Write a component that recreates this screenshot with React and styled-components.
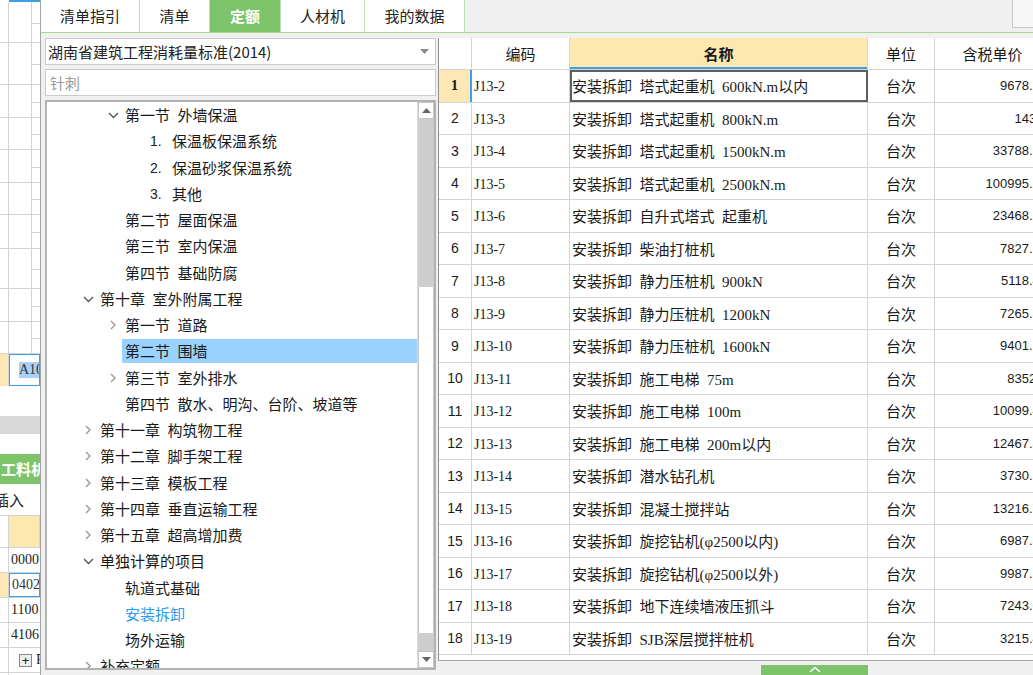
import React from 'react';
import styled, { createGlobalStyle } from 'styled-components';

const GlobalStyle = createGlobalStyle`
  html, body { margin: 0; padding: 0; }
  body {
    font-family: "Noto Sans CJK SC", "Liberation Sans", sans-serif;
    background: #fff;
    overflow: hidden;
  }
  * { box-sizing: border-box; }
`;

// CJK text in the original uses a wide gap between words
const wide = s => s.replace(/ /g, '\u2002');

const tabs = [
    { label: '清单指引', w: 99 },
    { label: '清单', w: 70 },
    { label: '定额', w: 71, active: true },
    { label: '人材机', w: 84 },
    { label: '我的数据', w: 100 },
];

const tree = [
    { level: 1, icon: 'down', text: '第一节 外墙保温' },
    { level: 2, num: '1.', text: '保温板保温系统' },
    { level: 2, num: '2.', text: '保温砂浆保温系统' },
    { level: 2, num: '3.', text: '其他' },
    { level: 1, text: '第二节 屋面保温' },
    { level: 1, text: '第三节 室内保温' },
    { level: 1, text: '第四节 基础防腐' },
    { level: 0, icon: 'down', text: '第十章 室外附属工程' },
    { level: 1, icon: 'right', text: '第一节 道路' },
    { level: 1, text: '第二节 围墙', selected: true },
    { level: 1, icon: 'right', text: '第三节 室外排水' },
    { level: 1, text: '第四节 散水、明沟、台阶、坡道等' },
    { level: 0, icon: 'right', text: '第十一章 构筑物工程' },
    { level: 0, icon: 'right', text: '第十二章 脚手架工程' },
    { level: 0, icon: 'right', text: '第十三章 模板工程' },
    { level: 0, icon: 'right', text: '第十四章 垂直运输工程' },
    { level: 0, icon: 'right', text: '第十五章 超高增加费' },
    { level: 0, icon: 'down', text: '单独计算的项目' },
    { level: 1, text: '轨道式基础' },
    { level: 1, text: '安装拆卸', link: true },
    { level: 1, text: '场外运输' },
    { level: 0, icon: 'right', text: '补充定额' },
];

const rows = [
    ['J13-2', '安装拆卸 塔式起重机 600kN.m以内', '9678.25'],
    ['J13-3', '安装拆卸 塔式起重机 800kN.m', '143.2'],
    ['J13-4', '安装拆卸 塔式起重机 1500kN.m', '33788.56'],
    ['J13-5', '安装拆卸 塔式起重机 2500kN.m', '100995.23'],
    ['J13-6', '安装拆卸 自升式塔式 起重机', '23468.25'],
    ['J13-7', '安装拆卸 柴油打桩机', '7827.15'],
    ['J13-8', '安装拆卸 静力压桩机 900kN', '5118.42'],
    ['J13-9', '安装拆卸 静力压桩机 1200kN', '7265.37'],
    ['J13-10', '安装拆卸 静力压桩机 1600kN', '9401.18'],
    ['J13-11', '安装拆卸 施工电梯 75m', '8352.6'],
    ['J13-12', '安装拆卸 施工电梯 100m', '10099.45'],
    ['J13-13', '安装拆卸 施工电梯 200m以内', '12467.83'],
    ['J13-14', '安装拆卸 潜水钻孔机', '3730.52'],
    ['J13-15', '安装拆卸 混凝土搅拌站', '13216.74'],
    ['J13-16', '安装拆卸 旋挖钻机(φ2500以内)', '6987.31'],
    ['J13-17', '安装拆卸 旋挖钻机(φ2500以外)', '9987.31'],
    ['J13-18', '安装拆卸 地下连续墙液压抓斗', '7243.65'],
    ['J13-19', '安装拆卸 SJB深层搅拌桩机', '3215.48'],
];

const sheetRows = [41, 42, 33, 32, 33, 32, 34, 40, 33, 32];
const sheetData = ['0000', '0402', '1100', '4106'];

const Chevron = ({ dir }) => (
    dir === 'down' ? (
        <svg width="11" height="10" viewBox="0 0 11 10">
            <polyline points="1,3 5.5,7.5 10,3" fill="none" stroke="#555" strokeWidth="1.4" />
        </svg>
    ) : (
        <svg width="11" height="10" viewBox="0 0 11 10">
            <polyline points="3,1 7,5 3,9" fill="none" stroke="#9a9a9a" strokeWidth="1.4" />
        </svg>
    )
);

const Triangle = ({ up, color = '#666' }) => (
    <svg width="9" height="5" viewBox="0 0 9 5">
        <polygon points={up ? '0,5 9,5 4.5,0' : '0,0 9,0 4.5,5'} fill={color} />
    </svg>
);

const App = () => {
    return (
        <Page>
            <GlobalStyle />
            <Sheet>
                <SheetTopLine />
                {sheetRows.map((h, i) => (
                    <SheetRow key={i} $h={h}>
                        <SheetCell />
                        <SheetCell />
                        <TickCell />
                    </SheetRow>
                ))}
                <SheetRow $h={32} $noline>
                    <SheetCell $bg="#fde8b5" />
                    <ActiveCell><Highlight>A10</Highlight></ActiveCell>
                </SheetRow>
                <SheetGap $h={30} />
                <SheetBar />
                <SheetGap $h={20} />
                <SheetGreen>工料机</SheetGreen>
                <SheetText>插入</SheetText>
                <SheetRow $h={32}>
                    <SheetCell />
                    <SheetCell $bg="#fde8b0" $span />
                </SheetRow>
                {sheetData.map((d, i) => (
                    <SheetRow key={d} $h={25}>
                        <SheetCell $bg={i === 1 ? '#fde8b5' : 'transparent'} />
                        {i === 1 ? (
                            <ActiveCell $mono>{d}</ActiveCell>
                        ) : (
                            <DataCell>{d}</DataCell>
                        )}
                    </SheetRow>
                ))}
                <SheetRow $h={25}>
                    <SheetCell />
                    <DataCell><PlusBox>+</PlusBox>F</DataCell>
                </SheetRow>
                <SheetRow $h={25}>
                    <SheetCell />
                    <DataCell><PlusBox>+</PlusBox></DataCell>
                </SheetRow>
            </Sheet>

            <Window>
                <TabBar>
                    {tabs.map(t => (
                        <Tab key={t.label} $w={t.w} $active={t.active}>{t.label}</Tab>
                    ))}
                    <TabFill>
                        <CornerButton />
                    </TabFill>
                </TabBar>

                <Body>
                    <LeftPanel>
                        <Select>
                            <span>湖南省建筑工程消耗量标准(2014)</span>
                            <Triangle color="#8a8a8a" />
                        </Select>
                        <Search>针刺</Search>
                        <TreeBox>
                            <TreeList>
                                {tree.map((n, i) => (
                                    <TreeRow key={i} $level={n.level}>
                                        <IconSlot>{n.icon && <Chevron dir={n.icon} />}</IconSlot>
                                        {n.num && <Num>{n.num}</Num>}
                                        <Label $selected={n.selected} $link={n.link}>{wide(n.text)}</Label>
                                    </TreeRow>
                                ))}
                            </TreeList>
                            <ScrollBar>
                                <ScrollBtn><Triangle up /></ScrollBtn>
                                <Thumb $h={168} />
                                <Track />
                                <Thumb $h={18} />
                                <ScrollBtn><Triangle /></ScrollBtn>
                            </ScrollBar>
                        </TreeBox>
                    </LeftPanel>

                    <RightPane>
                        <TableWrap>
                            <HeadRow>
                                <Cell />
                                <Cell $align="center">编码</Cell>
                                <Cell $align="center" $head>名称</Cell>
                                <Cell $align="center">单位</Cell>
                                <Cell $align="center">含税单价</Cell>
                            </HeadRow>
                            {rows.map(([code, name, price], i) => (
                                <DataRow key={code}>
                                    <NumCell $current={i === 0}>{i + 1}</NumCell>
                                    <CodeCell>{code}</CodeCell>
                                    <NameCell $selected={i === 0}>{wide(name)}</NameCell>
                                    <Cell $align="center">台次</Cell>
                                    <PriceCell>{price}</PriceCell>
                                </DataRow>
                            ))}
                        </TableWrap>
                        <Footer>
                            <Handle>
                                <svg width="12" height="7" viewBox="0 0 12 7">
                                    <polyline points="1,6 6,1.5 11,6" fill="none" stroke="#fff" strokeWidth="1.5" />
                                </svg>
                            </Handle>
                        </Footer>
                    </RightPane>
                </Body>
            </Window>
        </Page>
    );
};

export default App;

const Page = styled.div`
    display: flex;
    width: 1033px;
    height: 675px;
    overflow: hidden;
    background: #fff;
`;

/* spreadsheet showing behind the dialog */
const Sheet = styled.div`
    width: 40px;
    flex-shrink: 0;
    display: flex;
    flex-direction: column;
    overflow: hidden;
    background: #fff;
`;
const SheetTopLine = styled.div`
    height: 2px;
    margin-left: 9px;
    background: #3ba0e6;
    flex-shrink: 0;
`;
const SheetRow = styled.div`
    display: grid;
    grid-template-columns: 9px 23px 8px;
    height: ${p => p.$h}px;
    flex-shrink: 0;
    border-bottom: ${p => p.$noline ? 'none' : '1px solid #d3d3d3'};
`;
const SheetCell = styled.div`
    background: ${p => p.$bg || 'transparent'};
    border-right: 1px solid #d3d3d3;
    grid-column: ${p => p.$span ? 'span 2' : 'auto'};
`;
const TickCell = styled.div`
    position: relative;
    &::after {
        content: '';
        position: absolute;
        left: 0;
        right: 0;
        top: 52%;
        border-top: 1px solid #d3d3d3;
    }
`;
const ActiveCell = styled.div`
    grid-column: span 2;
    border: 1px solid #3ba0e6;
    display: flex;
    align-items: center;
    padding-left: ${p => p.$mono ? '2px' : '9px'};
    font-family: "Liberation Serif", serif;
    font-size: 14px;
    color: #333;
    overflow: hidden;
    white-space: nowrap;
`;
const Highlight = styled.span`
    background: #a9d1f7;
    color: #333;
`;
const DataCell = styled.div`
    grid-column: span 2;
    display: flex;
    align-items: center;
    gap: 4px;
    padding-left: 2px;
    font-family: "Liberation Serif", serif;
    font-size: 14px;
    color: #222;
    overflow: hidden;
    white-space: nowrap;
`;
const PlusBox = styled.span`
    width: 13px;
    height: 13px;
    border: 1px solid #888;
    background: #eee;
    font-family: "Liberation Sans", sans-serif;
    font-size: 13px;
    line-height: 11px;
    text-align: center;
    margin-left: 8px;
    flex-shrink: 0;
`;
const SheetGap = styled.div`
    height: ${p => p.$h}px;
    flex-shrink: 0;
`;
const SheetBar = styled.div`
    height: 18px;
    flex-shrink: 0;
    background: #d9d9d9;
`;
const SheetGreen = styled.div`
    height: 30px;
    flex-shrink: 0;
    background: #7cc36a;
    color: #fff;
    font-weight: 700;
    font-size: 15px;
    line-height: 30px;
    white-space: nowrap;
    padding-left: 1px;
`;
const SheetText = styled.div`
    height: 32px;
    flex-shrink: 0;
    font-size: 15px;
    line-height: 32px;
    white-space: nowrap;
    margin-left: -6px;
    color: #222;
    border-bottom: 1px solid #d3d3d3;
`;

/* dialog */
const Window = styled.div`
    flex: 1;
    min-width: 0;
    display: flex;
    flex-direction: column;
    background: #f0f0f0;
    border-left: 1px solid #a4a4a4;
`;
const TabBar = styled.div`
    display: flex;
    height: 33px;
    flex-shrink: 0;
    border-bottom: 1px solid #a3da8f;
`;
const Tab = styled.div`
    width: ${p => p.$w}px;
    display: flex;
    align-items: center;
    justify-content: center;
    padding-bottom: 2px;
    background: ${p => p.$active ? '#7cc36a' : '#fff'};
    color: ${p => p.$active ? '#fff' : '#222'};
    font-weight: ${p => p.$active ? 700 : 400};
    font-size: 15px;
    border-right: 1px solid #b9e2a9;
`;
const TabFill = styled.div`
    flex: 1;
    display: flex;
    justify-content: flex-end;
`;
const CornerButton = styled.div`
    width: 21px;
    height: 28px;
    background: #f7f7f7;
    border: 1px solid #c8c8c8;
    border-top: none;
    border-right: none;
`;
const Body = styled.div`
    flex: 1;
    min-height: 0;
    display: flex;
    padding-top: 5px;
`;
const LeftPanel = styled.div`
    width: 397px;
    flex-shrink: 0;
    display: flex;
    flex-direction: column;
    gap: 4px;
    padding: 0 2px 0 4px;
`;
const Select = styled.div`
    height: 27px;
    flex-shrink: 0;
    background: #fff;
    border: 1px solid #cbcbcb;
    display: flex;
    align-items: center;
    justify-content: space-between;
    padding: 0 6px 0 2px;
    font-size: 15px;
    color: #222;
`;
const Search = styled.div`
    height: 27px;
    flex-shrink: 0;
    background: #fff;
    border: 1px solid #cbcbcb;
    display: flex;
    align-items: center;
    padding-left: 4px;
    font-size: 15px;
    color: #9a9a9a;
`;
const TreeBox = styled.div`
    height: 570px;
    flex-shrink: 0;
    display: flex;
    background: #fff;
    border: 2px solid #b2b2b2;
    overflow: hidden;
`;
const TreeList = styled.div`
    flex: 1;
    min-width: 0;
    overflow: hidden;
`;
const TreeRow = styled.div`
    height: 26.25px;
    display: flex;
    align-items: center;
    padding-left: ${p => 36 + p.$level * 25}px;
`;
const IconSlot = styled.div`
    width: 17px;
    flex-shrink: 0;
    display: flex;
    align-items: center;
`;
const Num = styled.span`
    width: 22px;
    flex-shrink: 0;
    font-family: "Liberation Sans", sans-serif;
    font-size: 14px;
    color: #222;
`;
const Label = styled.span`
    flex: 1;
    height: 24px;
    line-height: 24px;
    margin-left: -3px;
    padding-left: 3px;
    font-size: 15px;
    white-space: nowrap;
    color: ${p => p.$link ? '#2b9bf0' : '#1a1a1a'};
    background: ${p => p.$selected ? '#99d1ff' : 'transparent'};
`;
const ScrollBar = styled.div`
    width: 17px;
    flex-shrink: 0;
    display: flex;
    flex-direction: column;
    background: #f0f0f0;
    border-left: 1px solid #dcdcdc;
`;
const ScrollBtn = styled.div`
    height: 17px;
    flex-shrink: 0;
    display: flex;
    align-items: center;
    justify-content: center;
    background: #fff;
    border: 1px solid #c4c4c4;
`;
const Thumb = styled.div`
    height: ${p => p.$h}px;
    flex-shrink: 0;
    background: #cdcdcd;
`;
const Track = styled.div`
    flex: 1;
    background: #fff;
    border-left: 1px solid #c4c4c4;
    border-right: 1px solid #c4c4c4;
`;
const RightPane = styled.div`
    flex: 1;
    min-width: 0;
    display: flex;
    flex-direction: column;
    overflow: hidden;
`;
const TableWrap = styled.div`
    height: 623px;
    flex-shrink: 0;
    background: #fff;
    border-left: 1px solid #8f8f8f;
    border-bottom: 1px solid #a8a8a8;
    overflow: hidden;
`;
const cols = '33px 98px 298px 67px 116px';
const HeadRow = styled.div`
    display: grid;
    grid-template-columns: ${cols};
    width: 612px;
    height: 32px;
    border-bottom: 1px solid #d4d4d4;
`;
const DataRow = styled.div`
    display: grid;
    grid-template-columns: ${cols};
    width: 612px;
    height: 32.5px;
    border-bottom: 1px solid #d4d4d4;
`;
const Cell = styled.div`
    display: flex;
    align-items: center;
    justify-content: ${p => p.$align || 'flex-start'};
    border-right: 1px solid #d4d4d4;
    font-size: 15px;
    color: #1a1a1a;
    white-space: nowrap;
    overflow: hidden;
    font-weight: ${p => p.$head ? 700 : 400};
    background: ${p => p.$head ? '#fde8b0' : 'transparent'};
    box-shadow: ${p => p.$head ? 'inset 0 -2px 0 #3ba0e6' : 'none'};
`;
const NumCell = styled.div`
    display: flex;
    align-items: center;
    justify-content: center;
    border-right: ${p => p.$current ? '2px solid #3ba0e6' : '1px solid #d4d4d4'};
    background: ${p => p.$current ? '#fde8b5' : 'transparent'};
    font-family: ${p => p.$current ? '"Liberation Serif", serif' : '"Liberation Sans", sans-serif'};
    font-weight: ${p => p.$current ? 700 : 400};
    font-size: ${p => p.$current ? '15px' : '14px'};
    color: #1a1a1a;
`;
const CodeCell = styled.div`
    display: flex;
    align-items: center;
    padding: 3px 0 0 2px;
    border-right: 1px solid #d4d4d4;
    font-family: "Liberation Serif", serif;
    font-size: 14px;
    color: #1a1a1a;
`;
const NameCell = styled.div`
    display: flex;
    align-items: center;
    padding-left: 2px;
    border-right: 1px solid #d4d4d4;
    font-family: "Liberation Serif", "Noto Sans CJK SC", serif;
    font-size: 15px;
    color: #1a1a1a;
    white-space: nowrap;
    overflow: hidden;
    outline: ${p => p.$selected ? '2px solid #5f5f5f' : 'none'};
    outline-offset: -2px;
`;
const PriceCell = styled.div`
    display: flex;
    align-items: center;
    justify-content: flex-end;
    padding-right: 4px;
    font-family: "Liberation Sans", sans-serif;
    font-size: 13px;
    color: #1a1a1a;
`;
const Footer = styled.div`
    flex: 1;
    display: flex;
    align-items: flex-end;
    padding-left: 323px;
`;
const Handle = styled.div`
    width: 107px;
    height: 10px;
    background: #7cc36a;
    display: flex;
    justify-content: center;
    align-items: flex-start;
    padding-top: 1px;
`;
